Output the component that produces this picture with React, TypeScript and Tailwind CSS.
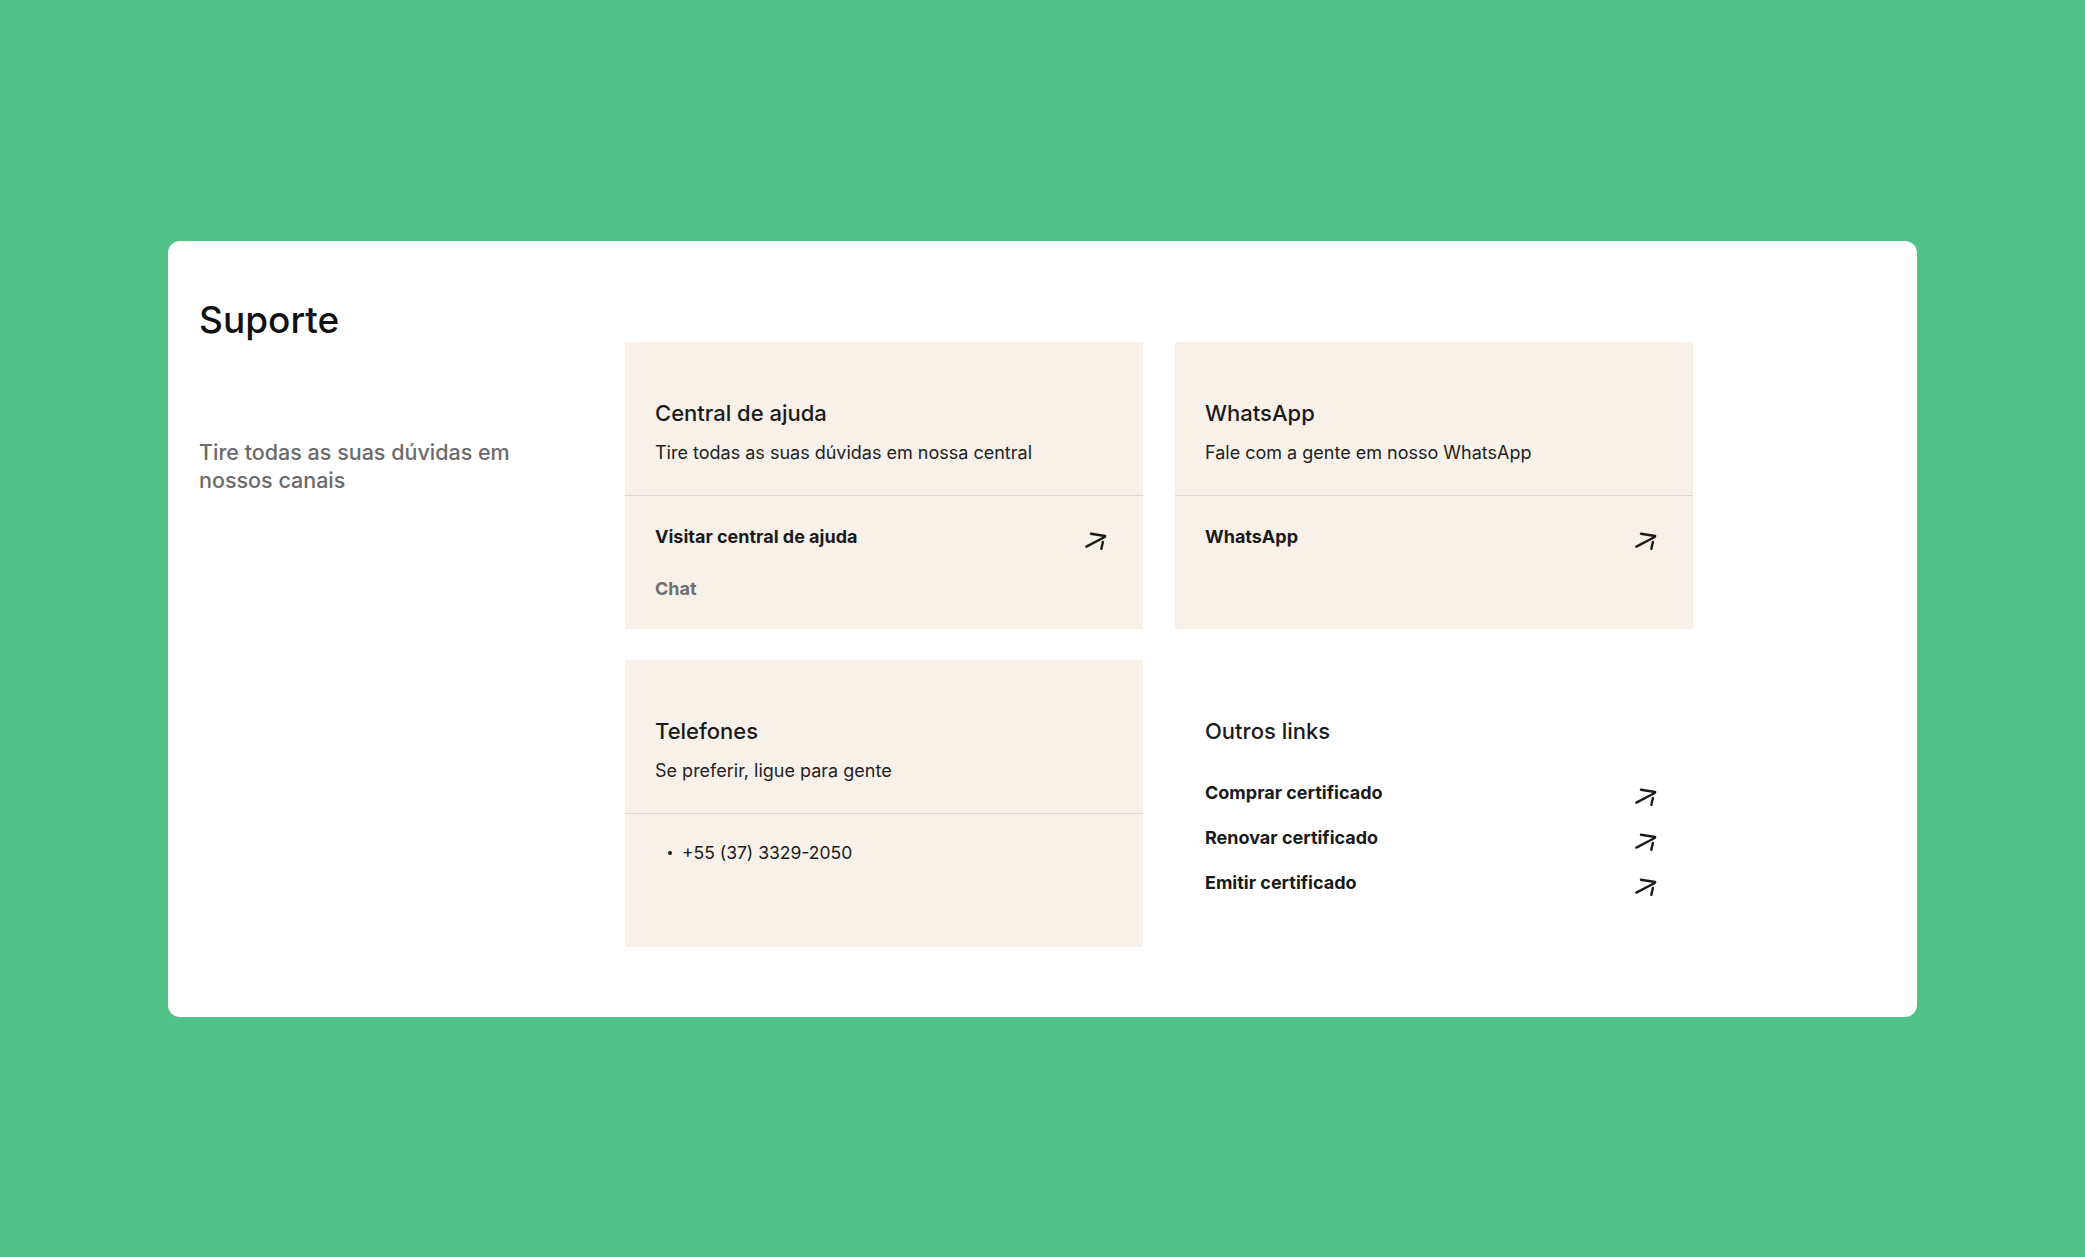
import type { ReactNode } from "react";

function ArrowIcon() {
  return (
    <svg
      viewBox="0 0 26 24"
      className="h-[22px] w-[24px] shrink-0 text-[#1a1a1a]"
      fill="none"
      stroke="currentColor"
      strokeWidth="2.6"
      strokeLinecap="round"
      aria-hidden="true"
    >
      <path d="M2.5 17 L22.5 6.5" />
      <path d="M7.5 3 L23 5.5" />
      <path d="M20.5 12 L18.8 19.5" />
    </svg>
  );
}

function LinkRow({ label }: { label: string }) {
  return (
    <div className="flex items-start justify-between">
      <span className="text-[18px] leading-6 font-bold text-[#1a1a1a]">
        {label}
      </span>
      <span className="mt-[6px]">
        <ArrowIcon />
      </span>
    </div>
  );
}

function Tile({
  title,
  description,
  children,
}: {
  title: string;
  description: string;
  children: ReactNode;
}) {
  return (
    <div className="flex h-[287px] flex-col bg-[#f8f1ea]">
      <div className="h-[154px] border-b border-[#dcd8d3] px-[30px] pt-[57px]">
        <h3 className="text-[22px] leading-7 font-medium text-[#1a1a1a]">
          {title}
        </h3>
        <p className="mt-[13px] text-[18px] leading-[26px] text-[#222]">
          {description}
        </p>
      </div>
      <div className="pt-[29px] pr-[35px] pl-[30px]">{children}</div>
    </div>
  );
}

export default function App() {
  return (
    <div className="flex h-screen items-center justify-center bg-[#50c187] font-['Inter',sans-serif]">
      <section
        aria-labelledby="support-heading"
        className="flex w-[1749px] rounded-xl bg-white pt-[57px] pb-[70px] pl-[31px]"
      >
        <div className="w-[426px] shrink-0">
          <h2
            id="support-heading"
            className="text-[37px] leading-[44px] font-medium text-[#111]"
          >
            Suporte
          </h2>
          <p className="mt-[96px] max-w-[340px] text-[21.5px] leading-[28px] font-medium text-[#6b6b6b]">
            Tire todas as suas dúvidas em nossos canais
          </p>
        </div>

        <div className="mt-[44px] grid grid-cols-[518px_518px] gap-x-8 gap-y-[31px]">
          <Tile
            title="Central de ajuda"
            description="Tire todas as suas dúvidas em nossa central"
          >
            <LinkRow label="Visitar central de ajuda" />
            <p className="mt-[24px] text-[18px] leading-6 font-bold text-[#6f6f6f]">
              Chat
            </p>
          </Tile>

          <Tile
            title="WhatsApp"
            description="Fale com a gente em nosso WhatsApp"
          >
            <LinkRow label="WhatsApp" />
          </Tile>

          <Tile title="Telefones" description="Se preferir, ligue para gente">
            <ul>
              <li className="flex items-center gap-[10px] pl-[13px] text-[17.5px] leading-5 text-[#1a1a1a]">
                <span className="size-[4px] rounded-full bg-[#1a1a1a]" />
                +55 (37) 3329-2050
              </li>
            </ul>
          </Tile>

          <div className="h-[287px] pt-[57px] pr-[35px] pl-[30px]">
            <h3 className="text-[22px] leading-7 font-medium text-[#1a1a1a]">
              Outros links
            </h3>
            <div className="mt-[36px] flex flex-col gap-[17px]">
              <LinkRow label="Comprar certificado" />
              <LinkRow label="Renovar certificado" />
              <LinkRow label="Emitir certificado" />
            </div>
          </div>
        </div>
      </section>
    </div>
  );
}
